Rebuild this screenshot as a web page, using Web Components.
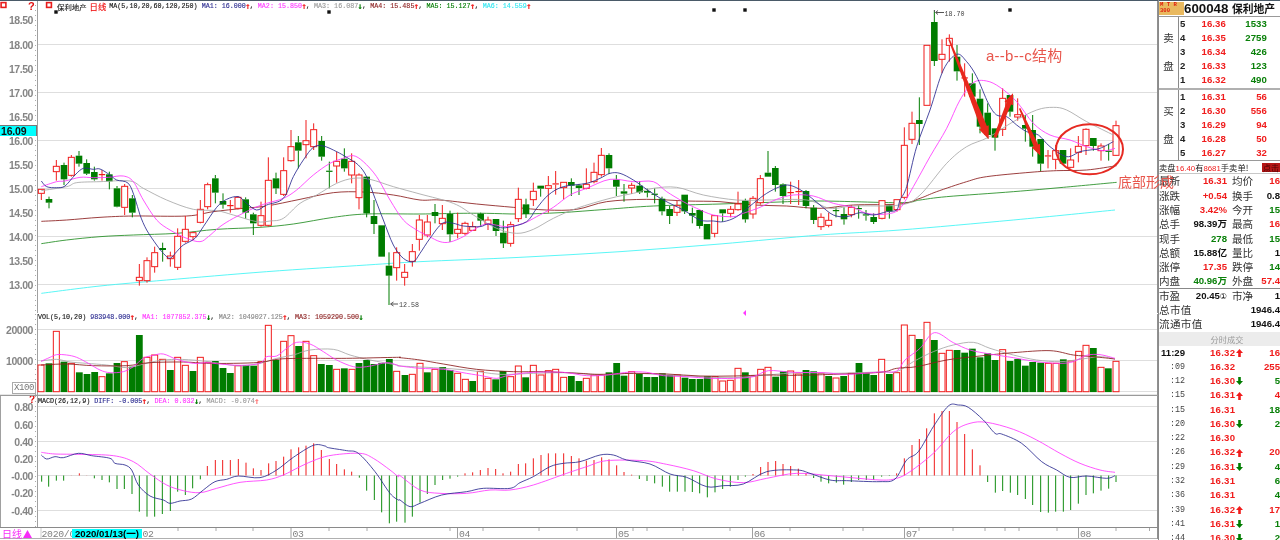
<!DOCTYPE html>
<html lang="zh"><head><meta charset="utf-8"><title>保利地产</title>
<style>html,body{margin:0;padding:0;background:#fff;overflow:hidden;width:1280px;height:540px}</style></head>
<body>
<stock-terminal></stock-terminal>
<script>
const SEG={A:(x,y)=>[x/3,120+y/3],B:(x,y)=>[420+x/3,120+y/3],C:(x,y)=>[880+x/3,y/3],
  V:(x,y)=>[x/3,300+y/3],W:(x,y)=>[400+x/3,310+y/3],X:(x,y)=>[880+x/3,310+y/3],M:(x,y)=>[x/3,420+y/3]};
const RED='#f01c1c',GRN='#007c00',NAVY='#2b2b90',MAG='#ff38ff',GRY='#a8a8a8',DRED='#8a1c1c',DGRN='#218c21',CYA='#3cf4f4';
const f=n=>+n.toFixed(2);
function smooth(p){let d=`M${f(p[0][0])} ${f(p[0][1])}`;
  for(let i=0;i<p.length-1;i++){const a=p[i-1]||p[i],b=p[i],c=p[i+1],e=p[i+2]||c;
    d+=`C${f(b[0]+(c[0]-a[0])/6)} ${f(b[1]+(c[1]-a[1])/6)} ${f(c[0]-(e[0]-b[0])/6)} ${f(c[1]-(e[1]-b[1])/6)} ${f(c[0])} ${f(c[1])}`;}
  return d;}
function line(groups,color,w=.85){let pts=[];groups.forEach(([s,l])=>{for(let i=0;i<l.length;i+=2)pts.push(SEG[s](l[i],l[i+1]));});
  pts=pts.filter((q,i)=>!i||q[0]>pts[i-1][0]+.5);
  return `<path d="${smooth(pts)}" fill="none" stroke="${color}" stroke-width="${w}"/>`;}
const BASE_STYLE=`:host{display:block;position:relative;overflow:hidden}svg{display:block;position:absolute;left:0;top:0}
text{font-family:"Liberation Sans",sans-serif}
.ax{font-size:10.5px;font-weight:700;fill:#858585;letter-spacing:-.45px;text-anchor:end;dominant-baseline:central}
i{font-style:normal}
i.ar{display:block;width:4.03px;font:700 8.6px/8px "DejaVu Sans Mono","Liberation Mono",monospace;text-align:center;overflow:visible;text-indent:-.6px}`;
function gridAndAxis(ys,labels,top,h){let s=ys.map(y=>`<line x1="37" x2="1157" y1="${y}" y2="${y}" stroke="#dedede"/>`).join('');
  s+=labels.map(([t,y])=>`<text class="ax" x="33" y="${y}">${t}</text>`).join('');
  s+=`<line x1="37.5" x2="37.5" y1="${top}" y2="${top+h}" stroke="#a0a0a0"/><line x1="35.5" x2="35.5" y1="${top}" y2="${top+h}" stroke="#aaa" stroke-dasharray="1 4"/>`;
  s+=`<line x1="1157.5" x2="1157.5" y1="${top}" y2="${top+h}" stroke="#909090"/>`;
  return s;}

/* candles: x, wickTop, bodyTop, bodyBottom, wickBottom, up(1)/down(0) */
const CANDLES={A:[[124,208,208,220,240,1],[147,230,237,248,265,0],[169,120,139,155,182,1],[192,128,135,178,195,0],[214,105,112,166,170,1],[237,93,107,131,140,0],[260,118,129,161,165,0],[283,140,156,178,182,0],[306,150,162,164,182,1],[328,155,163,184,208,0],[351,198,205,260,262,0],[374,192,199,262,285,1],[397,225,235,278,292,0],[418,432,472,482,497,1],[441,412,422,482,488,1],[464,380,398,440,458,1],[488,368,384,390,425,0],[511,395,408,416,440,1],[533,325,349,442,450,1],[556,288,328,364,368,1],[579,335,338,350,360,1],[601,240,268,307,310,1],[623,188,194,260,268,1],[646,165,175,218,250,0],[669,220,243,254,266,0],[691,240,255,257,278,1],[714,228,232,265,268,1],[737,232,238,278,296,0],[760,278,283,310,345,0],[783,245,287,316,320,1],[805,112,181,316,320,1],[828,158,175,205,222,0],[851,112,152,223,228,1],[873,30,80,122,125,1],[895,48,67,92,145,0],[918,0,62,74,115,1],[941,10,29,80,90,1],[965,48,63,110,122,0],[988,125,152,155,205,0],[1010,95,124,138,188,1],[1033,85,116,145,155,0],[1055,100,124,165,190,1],[1077,160,165,233,268,1],[1100,168,170,280,292,0],[1122,240,288,312,342,0],[1145,316,316,410,410,0],[1167,397,437,467,555,0],[1190,382,398,443,482,1],[1214,432,457,472,497,1],[1237,372,395,424,440,1]],
B:[[-2,285,300,358,392,1],[22,285,306,345,352,1],[45,252,276,288,310,0],[67,255,295,311,330,1],[90,272,282,343,366,0],[113,278,328,340,355,1],[135,305,310,340,345,1],[158,305,320,331,333,1],[182,278,281,302,318,0],[204,290,300,312,330,1],[228,297,297,333,348,0],[250,302,338,370,384,0],[272,305,314,370,380,1],[295,203,238,296,306,1],[318,236,253,282,294,0],[340,188,214,239,258,1],[362,197,197,206,230,0],[385,168,197,205,278,1],[407,153,190,194,224,1],[431,187,187,203,238,1],[454,175,186,197,228,0],[477,192,196,204,225,0],[499,145,193,205,208,1],[522,128,157,185,190,1],[544,84,106,164,170,1],[567,100,105,145,162,0],[589,165,179,200,228,0],[612,192,214,221,245,0],[635,188,196,204,222,1],[659,183,197,217,222,0],[682,206,213,218,232,0],[704,205,221,223,250,0],[726,230,236,274,286,0],[749,258,267,288,312,0],[771,242,257,277,288,1],[794,224,224,274,282,0],[817,263,279,287,310,0],[839,270,270,318,326,0],[861,312,312,358,358,0],[884,285,287,340,352,1],[908,268,268,280,305,0],[932,258,268,280,292,1],[954,215,252,269,272,1],[976,236,242,298,308,0],[999,228,235,282,296,1],[1021,165,176,248,254,1],[1044,93,158,170,170,0],[1066,138,144,195,215,0],[1089,190,193,228,252,0],[1112,185,216,218,252,1],[1136,180,213,217,255,1],[1158,210,213,258,265,0],[1181,255,263,300,312,0],[1203,280,292,320,330,1],[1226,278,301,316,322,1],[1248,262,270,273,292,0],[1272,262,282,298,314,0],[1294,255,262,284,292,1],[1316,256,264,268,296,0],[1338,270,283,287,302,0],[1361,280,291,306,312,0],[1386,240,242,295,298,1],[1408,254,256,274,296,0],[1431,239,239,269,275,1]],
C:[[73,382,436,592,598,1],[96,335,370,418,432,1],[118,292,360,372,435,0],[141,136,136,316,316,1],[163,30,66,183,198,0],[186,118,163,178,220,1],[208,103,115,136,185,1],[231,135,170,214,242,0],[254,190,232,235,290,1],[277,220,250,290,310,0],[300,268,296,380,400,0],[323,310,338,405,415,0],[345,385,385,413,452,0],[368,265,295,388,408,1],[390,285,285,335,350,0],[413,295,344,351,362,1],[436,345,375,386,425,0],[458,345,390,440,470,0],[482,417,417,491,513,0],[504,450,466,470,505,1],[527,435,452,478,508,1],[549,450,450,491,495,0],[572,445,480,502,505,1],[595,408,439,457,487,1],[618,385,388,437,465,1],[640,414,414,438,452,0],[663,430,438,452,482,1],[686,432,452,455,482,0],[708,362,377,466,468,1]]};

const MA={
 m1:[['A',[124,183,140,200,170,203,195,198,225,165,250,145,280,148,300,147,330,165,350,180,385,190,405,235,420,285,440,330,470,375,490,400,510,415,530,395,550,375,585,355,610,320,650,262,680,238,715,230,740,250,770,270,800,255,850,235,880,170,910,120,940,82,970,78,1010,95,1040,112,1075,135,1100,170,1125,235,1150,300,1180,375,1210,415,1240,425]],['B',[0,400,30,355,67,310,100,310,130,318,180,320,205,312,235,322,265,322,320,305,350,265,385,225,430,200,500,190,540,175,570,160,600,160,640,180,680,208,730,240,790,270,840,300,880,303,910,305,950,290,1000,250,1040,220,1080,200,1110,196,1150,215,1200,255,1240,285,1280,290,1320,278,1360,285,1400,275,1430,270]],['C',[60,600,80,560,110,440,150,330,190,210,230,163,260,185,290,230,325,310,350,345,380,350,410,375,440,395,475,405,510,440,560,470,600,455,630,450,660,445,700,425]]],
 m2:[['A',[124,200,170,185,195,183,240,172,280,173,325,172,370,168,400,185,430,240,470,300,510,330,560,355,600,365,625,350,660,320,700,295,760,265,800,250,850,235,890,210,940,165,990,130,1030,115,1060,107,1090,125,1130,170,1170,240,1210,300,1250,330]],['B',[25,348,60,365,90,366,130,350,160,330,200,312,260,320,310,310,350,290,400,262,450,225,500,205,570,178,640,185,700,185,740,215,790,245,830,265,880,285,940,290,970,280,1020,262,1070,238,1120,225,1180,228,1240,250,1300,262,1340,280,1400,282,1440,265]],['C',[60,598,100,560,150,470,200,385,240,300,280,248,320,243,360,262,410,305,460,370,510,405,570,420,620,440,670,452,705,445]]],
 m3:[['A',[124,212,200,200,230,188,300,185,390,183,430,205,500,240,580,268,650,272,700,285,770,305,810,303,850,295,900,250,950,225,1010,190,1060,175,1110,178,1180,200,1260,222]],['B',[100,250,160,285,230,325,290,340,340,328,400,295,470,265,570,235,640,220,700,205,770,202,850,225,950,240,1040,240,1160,240,1230,265,1300,258,1440,255]],['C',[60,600,120,585,200,490,260,440,325,412,400,365,470,330,520,322,560,330,620,365,700,405]]],
 m4:[['A',[124,304,200,300,300,292,400,288,560,288,640,275,730,265,800,258,900,238,1000,218,1090,216,1180,225,1260,240]],['B',[60,240,170,252,280,262,380,270,470,268,560,245,680,238,800,243,900,245,1000,255,1100,258,1200,265,1300,255,1440,252]],['C',[60,610,120,595,170,575,260,545,320,530,450,517,530,512,620,510,710,497]]],
 m5:[['A',[124,371,200,360,300,350,400,345,530,340,650,328,780,322,880,312,1000,292,1100,282,1260,282]],['B',[120,280,200,280,300,282,420,278,560,268,700,258,900,252,1050,247,1200,243,1440,248]],['C',[120,600,200,590,400,575,550,562,710,547]]],
 m6:[['A',[124,520,300,498,500,480,800,455,1100,435,1260,425]],['B',[300,412,600,395,900,372,1200,345,1440,330]],['C',[400,660,705,630]]]};

const arrowsUp=`<polygon points="0,4 3.5,0 7,4 4.8,4 4.8,8 2.2,8 2.2,4" fill="${RED}"/>`;
const arrowsDn=`<polygon points="0,4 3.5,8 7,4 4.8,4 4.8,0 2.2,0 2.2,4" fill="${GRN}"/>`;

class ChartLegend extends HTMLElement{constructor(){super();this.attachShadow({mode:'open'}).innerHTML=`<style>
:host{display:flex;align-items:center;white-space:pre;font:6.7px/8px "Liberation Mono",monospace;color:#111;height:8px;-webkit-text-stroke:.12px currentColor}
::slotted(*){white-space:pre}</style><slot></slot>`;}}
customElements.define('chart-legend',ChartLegend);

class KlinePane extends HTMLElement{constructor(){super();const r=this.attachShadow({mode:'open'});
  let s=gridAndAxis([44.5,92.5,140.5,188.5,236.5,284.5],[['18.50',20],['18.00',44.5],['17.50',68.5],['17.00',92.5],['16.50',116.5],['16.00',140.5],['15.50',164.5],['15.00',188.5],['14.50',212.5],['14.00',236.5],['13.50',260.5],['13.00',284.5]],0,313);
  s+=`<line x1="0" x2="1158" y1="0.5" y2="0.5" stroke="#4a5a68"/><line x1="0" x2="1158" y1="313.5" y2="313.5" stroke="#8a8a8a"/>`;
  s+=line(MA.m6,CYA)+line(MA.m5,DGRN)+line(MA.m4,DRED);
  for(const k in CANDLES)for(const [x,wt,bt,bb,wb,up] of CANDLES[k]){const [px,t]=SEG[k](x,wt),[,b1]=SEG[k](x,bt),[,b2]=SEG[k](x,bb),[,b]=SEG[k](x,wb),c=up?RED:GRN;
    s+=`<path d="M${f(px)} ${f(t)}V${f(b1)}M${f(px)} ${f(b2)}V${f(b)}" stroke="${c}" fill="none"/>`;
    if(b2-b1<1.6)s+=`<rect x="${f(px-3.2)}" y="${f(b1)}" width="6.4" height="1.2" fill="${c}"/>`;
    else if(up)s+=`<rect x="${f(px-3)}" y="${f(b1)}" width="6" height="${f(b2-b1)}" fill="#fff" stroke="${c}"/>`;
    else s+=`<rect x="${f(px-3.3)}" y="${f(b1)}" width="6.6" height="${f(b2-b1)}" fill="${c}"/>`;}
  s+=line(MA.m3,GRY)+line(MA.m2,MAG)+line(MA.m1,NAVY);
  s+=`<path d="M934.5 12V10M944 12.5H936M938 10.5L935.5 12.5L938 14.5" stroke="#555" fill="none"/><text x="944.5" y="15.5" class="hl">18.70</text>`;
  s+=`<path d="M398 304H391M393.5 302L390.5 304L393.5 306" stroke="#555" fill="none"/><text x="399" y="306.5" class="hl">12.58</text>`;
  [[56,12],[329,12],[714,10],[745,10],[1010,10]].forEach(([x,y])=>s+=`<rect x="${x-1.7}" y="${y-1.7}" width="3.4" height="3.4" fill="#111"/>`);
  [[3.5,5],[49,5]].forEach(([x,y])=>s+=`<rect x="${x-2.4}" y="${y-2.4}" width="4.8" height="4.8" fill="#fff" stroke="#e81c1c" stroke-width="1.6"/>`);
  s+=`<text x="28" y="10" class="q">?</text>`;
  r.innerHTML=`<style>${BASE_STYLE}
  .hl{font:6.7px "Liberation Mono",monospace;fill:#444}.q{font-size:11px;font-weight:700;fill:#e01010}
  chart-legend{position:absolute;left:57px;top:2px}
  .cn{font:7.4px "Noto Sans CJK SC",sans-serif;color:#222;margin-right:3px}.day{font:8.4px "Noto Sans CJK SC",sans-serif;color:#f01010;margin-right:3px}
  .tag{position:absolute;left:0;top:125px;width:37px;height:11px;box-sizing:border-box;background:#0ff;border-top:1px solid #777;border-right:1px solid #777;font:700 10.5px/10px "Liberation Sans",sans-serif;color:#111;padding-left:1px;letter-spacing:-.2px}</style>
  <svg width="1158" height="313" viewBox="0 0 1158 313">${s}</svg>
  <chart-legend><span class="cn">保利地产</span><span class="day">日线</span><span>MA(5,10,20,60,120,250) </span><i style="color:${NAVY}">MA1: 16.000</i><i class="ar" style="color:${RED}">↑</i><i>, </i><i style="color:${MAG}">MA2: 15.850</i><i class="ar" style="color:${RED}">↑</i><i>, </i><i style="color:#999">MA3: 16.087</i><i class="ar" style="color:${GRN}">↓</i><i>, </i><i style="color:${DRED}">MA4: 15.485</i><i class="ar" style="color:${RED}">↑</i><i>, </i><i style="color:${GRN}">MA5: 15.127</i><i class="ar" style="color:${RED}">↑</i><i>, </i><i style="color:#2ee6f0">MA6: 14.559</i><i class="ar" style="color:${RED}">↑</i></chart-legend>
  <div class="tag">16.09</div>`;}}
customElements.define('kline-pane',KlinePane);

const VOL={V:[[123,195,1],[147,190,0],[169,94,1],[192,185,0],[214,190,1],[238,217,0],[261,222,0],[284,216,0],[306,230,1],[328,220,0],[351,189,0],[373,185,1],[397,200,0],[418,105,0],[441,172,1],[464,165,1],[488,178,1],[511,210,0],[533,172,1],[556,196,1],[579,213,0],[601,172,1],[624,187,1],[646,183,0],[669,204,0],[691,219,0],[714,197,1],[738,195,0],[761,197,0],[783,185,1],[805,76,1],[828,180,0],[851,124,1],[873,107,1],[896,138,0],[918,124,1],[941,167,1],[964,192,0],[988,195,0],[1010,208,1],[1033,205,0],[1056,208,1],[1077,189,0],[1100,180,0],[1122,192,0],[1145,189,0],[1168,177,0],[1190,214,1]],
W:[[15,195,0],[37,193,1],[60,160,1],[82,187,0],[105,178,1],[128,171,0],[150,180,0],[173,190,1],[196,208,1],[218,213,0],[241,184,1],[264,205,1],[287,208,0],[309,183,0],[332,200,1],[355,168,1],[377,202,0],[400,166,1],[423,195,1],[445,182,1],[467,178,1],[491,202,1],[514,198,0],[537,213,0],[559,205,1],[582,195,1],[604,195,1],[627,187,0],[650,159,0],[672,197,0],[695,185,1],[718,192,0],[741,201,0],[764,201,0],[787,190,0],[810,195,0],[832,195,1],[855,203,0],[877,207,0],[900,207,0],[922,198,0],[945,200,1],[968,213,1],[991,211,1],[1014,175,1],[1036,187,0],[1059,198,1],[1082,178,1],[1104,172,1],[1127,200,0],[1150,184,0],[1172,183,1],[1195,192,1],[1218,180,0],[1241,184,0],[1263,190,1],[1286,198,0],[1308,204,1],[1331,198,0],[1354,190,1],[1377,159,0],[1399,190,0],[1421,195,0]],
X:[[5,148,1],[28,192,0],[50,188,1],[73,45,1],[96,76,1],[118,87,0],[141,37,1],[163,90,0],[186,130,1],[208,121,1],[231,120,0],[254,128,0],[277,116,0],[300,142,0],[323,130,0],[345,150,0],[368,119,1],[390,153,0],[413,147,0],[436,167,0],[458,156,0],[482,158,0],[505,160,1],[528,160,1],[550,148,0],[573,153,1],[596,124,1],[618,106,1],[640,114,0],[663,172,1],[685,175,0],[708,154,1]]};
class VolumePane extends HTMLElement{constructor(){super();const r=this.attachShadow({mode:'open'});
  let s=gridAndAxis([329.5,360.5,391.5],[['20000',329.5],['10000',360.5]],314,82);
  s+=`<line x1="0" x2="1158" y1="395.5" y2="395.5" stroke="#9a9a9a" stroke-width="1.4"/>`;
  for(const k in VOL)for(const [x,y,up] of VOL[k]){const [px,t]=SEG[k](x,y),base=391.7;
    s+=up?`<rect x="${f(px-3)}" y="${f(t)}" width="6" height="${f(base-t)}" fill="#fff" stroke="${RED}"/>`:`<rect x="${f(px-3.4)}" y="${f(t)}" width="6.8" height="${f(base-t+.4)}" fill="${GRN}"/>`;}
  s+=line([['V',[123,183,170,178,210,186,260,190,320,195,380,203,420,195,470,183,530,178,600,182,660,190,720,198,780,190,830,175,880,165,930,150,1000,148,1050,165,1110,180,1190,195]],['W',[0,168,100,173,200,180,300,193,400,190,500,188,600,195,700,190,800,195,900,200,1000,203,1100,195,1200,188,1300,190,1440,186]],['X',[50,185,100,155,160,125,220,105,280,97,330,115,400,135,470,150,540,155,600,148,660,140,705,147]]],GRY);
  s+=line([['V',[123,195,200,192,280,197,380,197,450,188,550,186,620,190,700,190,780,187,840,177,920,175,1040,175,1190,172]],['W',[0,143,60,150,130,162,230,178,340,185,430,185,540,190,600,193,700,190,800,192,900,198,1000,198,1100,195,1180,196,1300,193,1440,187]],['X',[50,175,110,170,200,150,300,138,400,128,510,122,580,135,640,140,705,147]]],DRED);
  s+=line([['V',[123,184,150,172,170,164,200,165,230,172,265,190,300,210,330,218,370,215,400,200,430,175,460,166,490,162,530,178,580,190,620,188,660,192,720,196,780,190,800,170,830,168,860,145,890,127,930,132,970,155,1010,180,1060,200,1100,200,1160,188,1190,195]],['W',[0,168,60,175,130,178,200,190,250,198,290,205,330,195,400,187,490,187,560,197,620,195,690,186,740,187,790,197,860,200,930,205,1000,205,1060,200,1105,182,1180,187,1270,188,1340,193,1440,186]],['X',[50,183,75,150,120,115,163,68,220,98,270,120,330,132,400,143,470,155,540,160,580,155,620,136,660,134,705,145]]],MAG);
  r.innerHTML=`<style>${BASE_STYLE}
  chart-legend{position:absolute;left:38px;top:0}
  .mul{position:absolute;left:12px;top:69px;width:24px;height:12px;box-sizing:border-box;border:1px solid #aaa;background:#fff;color:#777;font:9px/10px "Liberation Mono",monospace;text-align:center;letter-spacing:-.4px}</style>
  <svg width="1158" height="83" viewBox="0 313 1158 83">${s}</svg>
  <chart-legend><span>VOL(5,10,20) </span><i style="color:${NAVY}">983948.000</i><i class="ar" style="color:${RED}">↑</i><i>, </i><i style="color:${MAG}">MA1: 1077852.375</i><i class="ar" style="color:${GRN}">↓</i><i>, </i><i style="color:#888">MA2: 1049027.125</i><i class="ar" style="color:${RED}">↑</i><i>, </i><i style="color:${DRED}">MA3: 1059290.500</i><i class="ar" style="color:${GRN}">↓</i></chart-legend>
  <div class="mul">X100</div>`;}}
customElements.define('volume-pane',VolumePane);

const HIST={M:[[125,185],[146,200],[169,182],[191,182],[214,167,1],[238,160,1],[260,167,1],[283,175],[306,180],[328,187],[351,207],[373,207],[396,222],[418,275],[441,290],[464,290],[487,282],[511,273],[533,215],[556,225],[578,205],[601,178],[622,138,1],[646,120,1],[668,120,1],[691,120,1],[715,117,1],[738,128,1],[760,145,1],[783,150,1],[806,130,1],[828,123,1],[851,110,1],[873,88,1],[896,82,1],[918,77,1],[941,70,1],[964,90,1],[988,117,1],[1010,132,1],[1033,148,1],[1055,155,1],[1078,173],[1100,212],[1123,240],[1145,277],[1168,310],[1190,305]],
W:[[15,638],[37,620],[60,578],[82,552],[105,525],[128,510],[150,506],[173,500],[195,490,1],[218,487,1],[241,480,1],[264,474,1],[287,477,1],[309,490,1],[332,485,1],[355,462,1],[377,460,1],[400,445,1],[423,435,1],[445,430,1],[467,430,1],[491,430,1],[514,438,1],[537,445,1],[559,452,1],[582,450,1],[605,442,1],[627,448,1],[650,466,1],[672,486,1],[695,494,1],[718,507],[741,513],[764,520],[787,530],[809,545],[832,545],[855,545],[877,546],[899,550],[922,562],[945,547],[968,537],[991,530],[1014,510],[1036,500],[1059,492,1],[1082,471,1],[1104,456,1],[1127,453,1],[1149,462,1],[1172,468,1],[1195,476,1],[1218,490,1],[1241,504],[1263,515],[1286,520],[1309,518],[1331,524],[1354,516],[1376,510],[1399,510],[1421,510]],
X:[[5,500],[28,498],[50,490,1],[73,445,1],[96,405,1],[118,387,1],[140,355,1],[163,310,1],[186,303,1],[208,303,1],[231,336,1],[254,372,1],[277,418,1],[300,466,1],[323,516],[346,548],[368,543],[391,548],[413,555],[436,567],[458,585],[482,606],[505,608],[527,605],[550,605],[572,600],[595,581],[618,555],[640,550],[663,542],[686,536],[708,516]]};
class MacdPane extends HTMLElement{constructor(){super();const r=this.attachShadow({mode:'open'});
  let s=gridAndAxis([406.5,441.5,475.5,510.5],[['0.80',407],['0.60',424.5],['0.40',441.5],['0.20',458.5],['-0.00',475.5],['-0.20',493],['-0.40',510.5]],396,132);
  s+=`<line x1="0.5" x2="0.5" y1="396" y2="528" stroke="#a0a0a0"/><line x1="0" x2="1158" y1="527.5" y2="527.5" stroke="#8a8a8a"/>`;
  for(const k in HIST)for(const [x,y,up] of HIST[k]){const [px,t]=SEG[k](x,y);
    s+=`<line x1="${f(px)}" x2="${f(px)}" y1="475.5" y2="${f(t)}" stroke="${up?RED:'#108c10'}"/>`;}
  s+=line([['M',[124,97,165,102,240,103,340,107,400,125,450,162,500,195,550,212,600,218,650,205,720,187,800,180,850,165,900,140,950,118,1000,105,1080,100,1120,115,1170,150,1195,170]],['W',[0,497,60,540,120,550,200,550,270,540,330,540,400,525,500,490,560,470,620,452,730,452,800,463,880,482,950,507,1030,518,1100,505,1190,490,1300,498,1440,510]],['X',[50,505,90,485,160,430,220,365,270,340,320,337,400,358,470,390,540,430,600,460,660,480,705,487]]],MAG);
  s+=line([['M',[124,105,140,117,165,110,190,113,235,100,275,107,330,115,345,130,375,135,395,150,415,195,450,228,490,240,510,250,540,243,575,237,610,210,645,185,680,178,715,168,780,173,830,150,880,112,940,76,975,78,985,83,1040,92,1075,100,1125,155,1170,220,1195,240]],['W',[0,570,30,590,60,580,125,555,200,545,250,535,330,535,360,518,400,500,450,470,490,460,540,455,600,435,640,435,680,450,750,462,810,492,860,502,920,530,970,527,1030,522,1100,485,1190,480,1230,490,1290,510,1340,512,1440,515]],['X',[45,507,80,450,115,425,160,350,205,288,235,285,265,292,310,330,345,370,365,372,425,400,485,455,530,480,570,502,620,498,680,505,705,497]]],NAVY);
  s+=`<text x="29" y="403" style="font-size:10px;font-weight:700;fill:#e01010">?</text>`;
  r.innerHTML=`<style>${BASE_STYLE}
  chart-legend{position:absolute;left:38px;top:1px}</style>
  <svg width="1158" height="132" viewBox="0 396 1158 132">${s}</svg>
  <chart-legend><span>MACD(26,12,9) </span><i style="color:${NAVY}">DIFF: -0.005</i><i class="ar" style="color:${RED}">↑</i><i>, </i><i style="color:${MAG}">DEA: 0.032</i><i class="ar" style="color:${GRN}">↓</i><i>, </i><i style="color:#999">MACD: -0.074</i><i class="ar" style="color:#f77">↑</i></chart-legend>`;}}
customElements.define('macd-pane',MacdPane);

class DateAxis extends HTMLElement{constructor(){super();const r=this.attachShadow({mode:'open'});
  const t=[178,216,253,329,367,450,483,539,577,633,647,683,730,790,843,863,919,953,985,1005,1019,1057,1116,1149.5];
  let s=t.map(x=>`<line x1="${x}" x2="${x}" y1="0" y2="3" stroke="#aaa"/>`).join('');
  [[291,'03'],[457.5,'04'],[616.5,'05'],[752.5,'06'],[904.5,'07'],[1078.5,'08']].forEach(([x,l])=>{
    s+=`<line x1="${x}" x2="${x}" y1="0" y2="10" stroke="#a0a0a0"/><text x="${x+1.5}" y="8.6">${l}</text>`;});
  s+=`<text x="41.5" y="8.6">2020/0</text><text x="142.5" y="8.6">02</text><line x1="41" x2="41" y1="0" y2="10" stroke="#ccc"/>`;
  s+=`<line x1="0" x2="1158" y1="10.5" y2="10.5" stroke="#b0b0b0"/><line x1="1157.5" x2="1157.5" y1="0" y2="11" stroke="#909090"/>`;
  r.innerHTML=`<style>:host{display:block;position:relative;overflow:hidden}
  svg{position:absolute;left:0;top:0}text{font:9.8px "Liberation Mono",monospace;fill:#808080;letter-spacing:-.3px}
  .name{position:absolute;left:2px;top:0;font:10px/11px "Noto Sans CJK SC",sans-serif;color:#f82cf8;display:flex;align-items:center;gap:1px}
  .cur{position:absolute;left:72px;top:1px;width:70px;height:9px;background:#0ff;color:#000;font:700 9.6px/9.4px "Liberation Sans","Noto Sans CJK SC",sans-serif;text-align:center;white-space:nowrap}</style>
  <svg width="1158" height="12" viewBox="0 0 1158 12">${s}</svg>
  <div class="name"><span>日线</span><svg style="position:static" width="9" height="8" viewBox="0 0 9 8"><polygon points="0,8 4.5,0 9,8" fill="#f82cf8"/></svg></div>
  <div class="cur">2020/01/13(一)</div>`;}}
customElements.define('date-axis',DateAxis);

class ChartColumn extends HTMLElement{constructor(){super();this.attachShadow({mode:'open'}).innerHTML=`<style>
:host{display:grid;grid-template-rows:313px 83px 132px 12px;height:540px;width:1158px}</style>
<kline-pane></kline-pane><volume-pane></volume-pane><macd-pane></macd-pane><date-axis></date-axis>`;}}
customElements.define('chart-column',ChartColumn);

class QuoteHead extends HTMLElement{constructor(){super();this.attachShadow({mode:'open'}).innerHTML=`<style>
:host{display:flex;align-items:center;height:17px;box-sizing:border-box;border-top:1px solid #4a5a68;border-bottom:1px solid #999;white-space:nowrap;overflow:hidden}
.logo{width:25px;height:13px;background:#e9b95f;color:#e02010;font:700 5.6px/6px "Liberation Mono",monospace;padding-left:1px;box-sizing:border-box;flex:none;margin-top:1px}
.code{font:700 13.3px/15px "Liberation Sans",sans-serif;color:#111}
.nm{font:700 10.8px/15px "Noto Sans CJK SC",sans-serif;color:#111;margin-left:3.5px}</style>
<div class="logo">M T R<br>300</div><span class="code">600048</span><span class="nm">保利地产</span>`;}}
customElements.define('quote-head',QuoteHead);

class OrderBook extends HTMLElement{constructor(){super();const r=this.attachShadow({mode:'open'});
  const side=this.getAttribute('side'),buy=side==='买';
  const rows=JSON.parse(this.getAttribute('rows'));
  const cells=rows.map(([n,p,v],i)=>`<b class="side" style="grid-row:${i+1}">${i===1?side:i===3?'盘':''}</b><span class="n">${n}</span><span class="p">${p}</span><span class="v" style="color:${buy?RED:'#0a800a'}">${v}</span>`).join('');
  r.innerHTML=`<style>
  :host{display:grid;grid-template-columns:19px 1px 7px 40px 41px 13px;grid-auto-rows:14.2px;height:71px;font:700 9.6px/14.2px "Liberation Sans",sans-serif;letter-spacing:.1px}
  .side{grid-column:1;font:400 10.5px/14.2px "Noto Sans CJK SC",sans-serif;color:#333;text-align:center}
  .rule{grid-column:2;grid-row:1/6;background:#8a8a8a}
  .n{grid-column:3;color:#222;margin-left:1px}
  .p{grid-column:4;text-align:right;color:${RED}}
  .v{grid-column:5;text-align:right}</style><div class="rule"></div>${cells}`;}}
customElements.define('order-book',OrderBook);

class AskStrip extends HTMLElement{constructor(){super();this.attachShadow({mode:'open'}).innerHTML=`<style>
:host{display:flex;align-items:center;justify-content:space-between;height:13px;font:8.3px/13px "Noto Sans CJK SC",sans-serif;color:#222;white-space:nowrap;border-top:1px solid #9a9a9a;box-sizing:border-box;overflow:hidden}
b{font:400 7.8px "Liberation Sans",sans-serif;color:${RED}}
.btn{width:18px;height:9px;background:#b41616;color:#4a0505;font:8px/9px "Noto Sans CJK SC",sans-serif;text-align:center}</style>
<span>卖盘<b>16.40</b>有<b>8681</b>手卖单!</span><span class="btn">点击</span>`;}}
customElements.define('ask-strip',AskStrip);

class StatTable extends HTMLElement{constructor(){super();const r=this.attachShadow({mode:'open'});
  const R=RED,G='#0a800a',K='#111';
  const d=[['最新','16.31',R,'均价','16',R],['涨跌','+0.54',R,'换手','0.8',K],['涨幅','3.42%',R,'今开','15',G],['总手','98.39万',K,'最高','16',R],['现手','278',G,'最低','15',G],['总额','15.88亿',K,'量比','1',K],['涨停','17.35',R,'跌停','14',G],['内盘','40.96万',G,'外盘','57.4',R]];
  const row=x=>`<span class="l">${x[0]}</span><span class="v" style="color:${x[2]}">${x[1]}</span><span></span><span class="l">${x[3]}</span><span class="v" style="color:${x[5]}">${x[4]}</span>`;
  r.innerHTML=`<style>
  :host{display:block;font:700 9.6px/14.3px "Liberation Sans","Noto Sans CJK SC",sans-serif;white-space:nowrap;overflow:hidden;border-top:1px solid #c8c8c8;box-sizing:border-box;padding-top:.15px;flex:none}
  .g{display:grid;grid-template-columns:22px 46px 5px 23px 25px;grid-auto-rows:14.3px}
  .l{font:400 10.6px/14.3px "Noto Sans CJK SC",sans-serif;color:#333}
  .v{text-align:right}
  .rule{height:1px;background:#888;margin-top:-1px}
  .wide{grid-column:1/3;font:400 10.6px/14.3px "Noto Sans CJK SC",sans-serif;color:#333;letter-spacing:.3px}
  .w2{grid-column:3/-1;text-align:right;color:#111}</style>
  <div class="g">${d.map(row).join('')}</div>
  <div class="rule"></div>
  <div class="g"><span class="l">市盈</span><span class="v" style="color:#111">20.45<span style="font:400 8px 'DejaVu Sans'">①</span></span><span></span><span class="l">市净</span><span class="v" style="color:#111">1</span>
  <span class="wide">总市值</span><span class="w2">1946.4</span>
  <span class="wide">流通市值</span><span class="w2">1946.4</span></div>`;}}
customElements.define('stat-table',StatTable);

class TradeList extends HTMLElement{constructor(){super();const r=this.attachShadow({mode:'open'});
  const R=RED,G='#0a800a';
  const d=[['11:29','16.32','u','16',R],[':09','16.32','','255',R],[':12','16.30','d','5',G],[':15','16.31','u','4',R],[':15','16.31','','18',G],[':20','16.30','d','2',G],[':22','16.30','','',G],[':26','16.32','u','20',R],[':29','16.31','d','4',G],[':32','16.31','','6',G],[':36','16.31','','4',G],[':39','16.32','u','17',R],[':41','16.31','d','1',G],[':44','16.30','d','2',G]];
  const ar=a=>a?`<svg width="7" height="8" viewBox="0 0 7 8">${a==='u'?arrowsUp:arrowsDn}</svg>`:'';
  r.innerHTML=`<style>
  :host{display:grid;grid-template-columns:26px 25px 26px 8px 36px;grid-auto-rows:14.27px;overflow:hidden;min-height:0;font:700 9.6px/14.27px "Liberation Sans",sans-serif;letter-spacing:.25px}
  .t{text-align:right;font:400 8.4px/14.27px "Liberation Mono",monospace;color:#444;letter-spacing:0}
  .t.big{font:700 9.6px/14.27px "Liberation Sans",sans-serif;color:#111}
  .p{grid-column:3;color:${R}}.a{display:flex;align-items:center}.v{text-align:right;letter-spacing:0}</style>
  ${d.map((x,i)=>`<span class="t ${i?'':'big'}">${x[0]}</span><span class="p">${x[1]}</span><span class="a">${ar(x[2])}</span><span class="v" style="color:${x[4]}">${x[3]}</span>`).join('')}`;}}
customElements.define('trade-list',TradeList);

class QuotePanel extends HTMLElement{constructor(){super();this.attachShadow({mode:'open'}).innerHTML=`<style>
:host{display:flex;flex-direction:column;height:540px;box-sizing:border-box;border-left:1px solid #8a8a8a;overflow:hidden;background:#fff}
.sep{height:2px;background:#b0b0b0;flex:none}
.title{flex:none;height:14px;background:#ececec;color:#9a9a9a;font:8.2px/14px "Noto Sans CJK SC",sans-serif;text-align:center;padding-left:15px}
</style>
<quote-head></quote-head>
<order-book side="卖" rows='[[5,"16.36",1533],[4,"16.35",2759],[3,"16.34",426],[2,"16.33",123],[1,"16.32",490]]'></order-book>
<div class="sep"></div>
<order-book side="买" rows='[[1,"16.31",56],[2,"16.30",556],[3,"16.29",94],[4,"16.28",50],[5,"16.27",32]]'></order-book>
<ask-strip></ask-strip>
<stat-table></stat-table>
<div class="title">分时成交</div>
<trade-list></trade-list>`;}}
customElements.define('quote-panel',QuotePanel);

class AnnotationLayer extends HTMLElement{constructor(){super();const r=this.attachShadow({mode:'open'});
  const C=(x,y)=>[880+x/3,y/3];
  function arrow(a,b,w0,w1,hw,hl){const [x1,y1]=C(...a),[x2,y2]=C(...b),L=Math.hypot(x2-x1,y2-y1),ux=(x2-x1)/L,uy=(y2-y1)/L,nx=-uy,ny=ux,bx=x2-ux*hl,by=y2-uy*hl;
    const P=[[x1+nx*w0/2,y1+ny*w0/2],[bx+nx*w1/2,by+ny*w1/2],[bx+nx*hw/2,by+ny*hw/2],[x2,y2],[bx-nx*hw/2,by-ny*hw/2],[bx-nx*w1/2,by-ny*w1/2],[x1-nx*w0/2,y1-ny*w0/2]];
    return `<polygon points="${P.map(p=>f(p[0])+','+f(p[1])).join(' ')}" fill="#e8281c"/>`;}
  const s=arrow([207,118],[326,418],1.5,6.5,10.5,13)+arrow([345,412],[399,280],3,5,9.5,11)+arrow([419,325],[481,467],1.5,5,9,11)
    +`<ellipse cx="1089.5" cy="149.3" rx="33.5" ry="25" fill="none" stroke="#e62a22" stroke-width="2"/>`;
  r.innerHTML=`<style>:host{position:absolute;inset:0;pointer-events:none;overflow:hidden;display:block}
  svg{position:absolute;left:0;top:0}
  .n{position:absolute;color:#e8564c;white-space:nowrap;font-family:"Liberation Sans","Noto Sans CJK SC",sans-serif}</style>
  <svg width="1280" height="540" viewBox="0 0 1280 540">${s}</svg>
  <div class="n" style="left:986px;top:47px;font-size:15px;line-height:18px;letter-spacing:.25px">a--b--c结构</div>
  <div class="n" style="left:1118px;top:173px;font-size:14px;line-height:18px">底部形成</div>`;}}
customElements.define('annotation-layer',AnnotationLayer);

class StockTerminal extends HTMLElement{constructor(){super();this.attachShadow({mode:'open'}).innerHTML=`<style>
:host{display:grid;grid-template-columns:1158px 122px;width:1280px;height:540px;position:relative;overflow:hidden;background:#fff;filter:blur(.3px)}
.mark{position:absolute;left:743px;top:310px;width:0;height:0;border:3px solid transparent;border-right:3px solid ${MAG};border-left:0}</style>
<chart-column></chart-column><quote-panel></quote-panel><div class="mark"></div><annotation-layer></annotation-layer>`;}}
customElements.define('stock-terminal',StockTerminal);
</script>
</body></html>
